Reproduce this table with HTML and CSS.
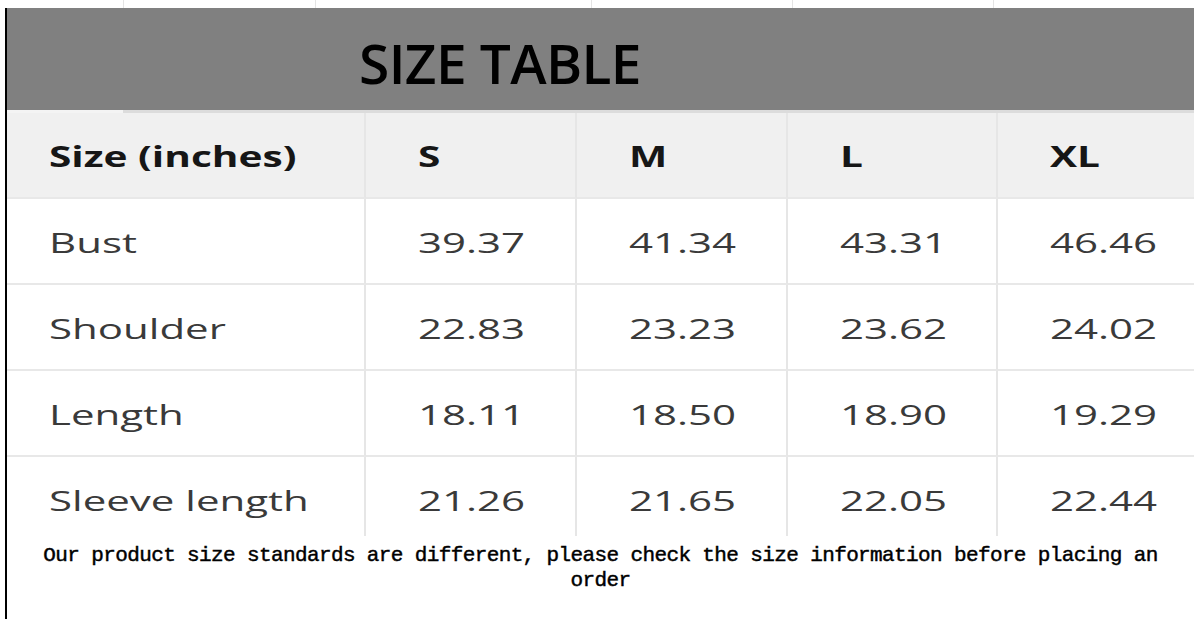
FILE: index.html
```html
<!DOCTYPE html>
<html>
<head>
<meta charset="utf-8">
<link rel="stylesheet" href="styles.css">
</head>
<body>
<div class="topgrid">
  <div class="tg c1"></div><div class="tg c2"></div><div class="tg c3"></div><div class="tg c4"></div><div class="tg c5"></div><div class="tg c6"></div>
</div>
<div class="page">
  <div class="banner"><h1 class="title">SIZE TABLE</h1></div>
  <div class="strip"></div>
  <div class="tablewrap">
    <div class="table">
      <div class="cell head first"><span class="t">Size (inches)</span></div>
      <div class="cell head"><span class="t">S</span></div>
      <div class="cell head"><span class="t">M</span></div>
      <div class="cell head"><span class="t">L</span></div>
      <div class="cell head last"><span class="t">XL</span></div>

      <div class="cell first"><span class="t">Bust</span></div>
      <div class="cell"><span class="t">39.37</span></div>
      <div class="cell"><span class="t">41.34</span></div>
      <div class="cell"><span class="t">43.31</span></div>
      <div class="cell last"><span class="t">46.46</span></div>

      <div class="cell first"><span class="t">Shoulder</span></div>
      <div class="cell"><span class="t">22.83</span></div>
      <div class="cell"><span class="t">23.23</span></div>
      <div class="cell"><span class="t">23.62</span></div>
      <div class="cell last"><span class="t">24.02</span></div>

      <div class="cell first"><span class="t">Length</span></div>
      <div class="cell"><span class="t">18.11</span></div>
      <div class="cell"><span class="t">18.50</span></div>
      <div class="cell"><span class="t">18.90</span></div>
      <div class="cell last"><span class="t">19.29</span></div>

      <div class="cell first"><span class="t">Sleeve length</span></div>
      <div class="cell"><span class="t">21.26</span></div>
      <div class="cell"><span class="t">21.65</span></div>
      <div class="cell"><span class="t">22.05</span></div>
      <div class="cell last"><span class="t">22.44</span></div>
    </div>
  </div>
  <p class="note">Our product size standards are different, please check the size information before placing an order</p>
</div>
</body>
</html>
```
FILE: styles.css
```css
html, body {
  margin: 0;
  padding: 0;
  background: #fff;
  overflow: hidden;
}
.topgrid {
  display: flex;
  height: 8px;
}
.tg {
  border-right: 1px solid #e4e4e4;
  box-sizing: border-box;
}
.c1 { width: 124px; }
.c2 { width: 192px; }
.c3 { width: 276px; }
.c4 { width: 201px; }
.c5 { width: 201px; }
.c6 { flex: 1; border-right: none; }

.page {
  margin-left: 5px;
  border-left: 2px solid #000;
  height: 611px;
  display: flex;
  flex-direction: column;
}
.banner {
  background: #808080;
  height: 102px;
  display: flex;
  align-items: center;
  padding-left: 352px;
}
.title {
  margin: 0;
  font-family: "Open Sans", "Noto Sans", sans-serif;
  font-weight: 600;
  font-size: 55px;
  letter-spacing: -0.6px;
  color: #000;
  line-height: 1;
  padding-top: 6px;
}
.strip {
  height: 3px;
  background: linear-gradient(to right, #f4f4f4 0, #f4f4f4 116px, #dcdcdc 116px);
}
.tablewrap {
  height: 423px;
  overflow: hidden;
}
.table {
  display: grid;
  grid-template-columns: 359px 211px 211px 210px 1fr;
  grid-auto-rows: 86px;
}
.cell {
  box-sizing: border-box;
  border-right: 2px solid #e6e6e6;
  border-bottom: 2px solid #e8e8e8;
  display: flex;
  align-items: center;
  padding-left: 52px;
  padding-top: 2px;
  font-family: "Open Sans", "Noto Sans", sans-serif;
  font-size: 28px;
  color: #3a3a3a;
  background: #fff;
}
.cell.first { padding-left: 42px; }
.cell.last { border-right: none; }
.cell.head {
  background: #f0f0f0;
  font-weight: 700;
  color: #161616;
}
.t {
  display: inline-block;
  transform: scaleX(1.5);
  transform-origin: 0 50%;
  white-space: nowrap;
}
.cell.head .t {
  transform: scaleX(1.45);
}
.note {
  margin: 0;
  padding: 7px 30px 0;
  text-align: center;
  font-family: "Liberation Mono", "DejaVu Sans Mono", monospace;
  font-weight: 400;
  -webkit-text-stroke: 0.45px #000;
  font-size: 21px;
  letter-spacing: -0.62px;
  line-height: 25px;
  color: #000;
}
```
